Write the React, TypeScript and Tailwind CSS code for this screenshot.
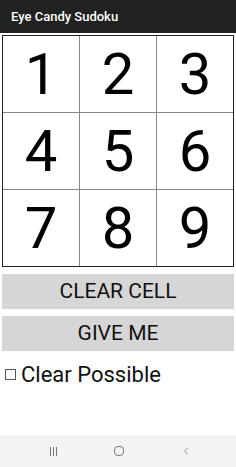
import { ChevronLeft } from 'lucide-react';

const digits = [1, 2, 3, 4, 5, 6, 7, 8, 9];

export default function App() {
  return (
    <div className="w-[236px] h-[467px] bg-white flex flex-col font-['Roboto',sans-serif] overflow-hidden">
      <div className="h-[33px] bg-[#212121] flex items-center px-[11px]">
        <span className="text-white text-[13px] font-medium">Eye Candy Sudoku</span>
      </div>

      <div className="px-[2px] pt-[2px]">
        <div className="border-[1.5px] border-[#222] bg-[#888] grid grid-cols-3 gap-px h-[232px]">
          {digits.map((d) => (
            <div key={d} className="bg-white flex items-center justify-center text-[58px] leading-none text-black">
              {d}
            </div>
          ))}
        </div>
      </div>

      <div className="px-[2px] pt-[7px] flex flex-col gap-[7px]">
        <button className="h-[35px] bg-[#d6d6d6] text-[21px] text-[#111]">CLEAR CELL</button>
        <button className="h-[35px] bg-[#d6d6d6] text-[21px] text-[#111]">GIVE ME</button>
      </div>

      <label className="flex items-center gap-[5px] px-[5px] pt-[7px]">
        <span className="w-[11px] h-[11px] border border-[#555] bg-white" />
        <span className="text-[22px] text-[#111]">Clear Possible</span>
      </label>

      <div className="flex-1" />

      <div className="h-[32px] bg-[#f3f3f3] flex items-center justify-center gap-[56px] pl-[6px]">
        <div className="flex gap-[2px] h-[9px] w-[8px]">
          <span className="w-px bg-[#777]" />
          <span className="w-px bg-[#777]" />
          <span className="w-px bg-[#777]" />
        </div>
        <span className="w-[10px] h-[10px] border border-[#777] rounded-[4px]" />
        <ChevronLeft className="w-[12px] h-[12px] text-[#777]" strokeWidth={1.5} />
      </div>
    </div>
  );
}
